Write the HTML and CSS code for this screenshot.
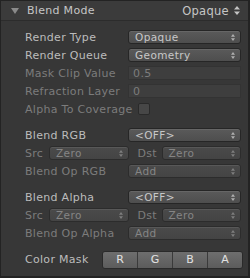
FILE: index.html
```html
<!DOCTYPE html>
<html>
<head>
  <meta charset="utf-8">
  <link rel="stylesheet" href="styles.css">
</head>
<body>
  <div class="panel">
    <div class="header">
      <span class="fold"></span>
      <span class="title">Blend Mode</span>
      <span class="mode">Opaque</span>
      <svg class="updown big" width="6" height="9" viewBox="0 0 6 9"><path d="M3 0L6 3.5H0Z M3 9L0 5.5H6Z" fill="#c4c4c4"/></svg>
    </div>

    <div class="body">
      <div class="row">
        <label class="label">Render Type</label>
        <div class="select"><span>Opaque</span><svg class="updown" width="4" height="7" viewBox="0 0 4 7"><path d="M2 0L4 2.7H0Z M2 7L0 4.3H4Z"/></svg></div>
      </div>
      <div class="row">
        <label class="label">Render Queue</label>
        <div class="select"><span>Geometry</span><svg class="updown" width="4" height="7" viewBox="0 0 4 7"><path d="M2 0L4 2.7H0Z M2 7L0 4.3H4Z"/></svg></div>
      </div>
      <div class="row">
        <label class="label off">Mask Clip Value</label>
        <div class="field">0.5</div>
      </div>
      <div class="row">
        <label class="label off">Refraction Layer</label>
        <div class="field">0</div>
      </div>
      <div class="row">
        <label class="label off">Alpha To Coverage</label>
        <div class="check"></div>
      </div>

      <div class="group">
        <div class="row">
          <label class="label">Blend RGB</label>
          <div class="select"><span>&lt;OFF&gt;</span><svg class="updown" width="4" height="7" viewBox="0 0 4 7"><path d="M2 0L4 2.7H0Z M2 7L0 4.3H4Z"/></svg></div>
        </div>
        <div class="row pair">
          <label class="label off short">Src</label>
          <div class="select dim"><span>Zero</span><svg class="updown" width="4" height="7" viewBox="0 0 4 7"><path d="M2 0L4 2.7H0Z M2 7L0 4.3H4Z"/></svg></div>
          <label class="label off short dst">Dst</label>
          <div class="select dim"><span>Zero</span><svg class="updown" width="4" height="7" viewBox="0 0 4 7"><path d="M2 0L4 2.7H0Z M2 7L0 4.3H4Z"/></svg></div>
        </div>
        <div class="row">
          <label class="label off">Blend Op RGB</label>
          <div class="select dim"><span>Add</span><svg class="updown" width="4" height="7" viewBox="0 0 4 7"><path d="M2 0L4 2.7H0Z M2 7L0 4.3H4Z"/></svg></div>
        </div>
      </div>

      <div class="group">
        <div class="row">
          <label class="label">Blend Alpha</label>
          <div class="select"><span>&lt;OFF&gt;</span><svg class="updown" width="4" height="7" viewBox="0 0 4 7"><path d="M2 0L4 2.7H0Z M2 7L0 4.3H4Z"/></svg></div>
        </div>
        <div class="row pair">
          <label class="label off short">Src</label>
          <div class="select dim"><span>Zero</span><svg class="updown" width="4" height="7" viewBox="0 0 4 7"><path d="M2 0L4 2.7H0Z M2 7L0 4.3H4Z"/></svg></div>
          <label class="label off short dst">Dst</label>
          <div class="select dim"><span>Zero</span><svg class="updown" width="4" height="7" viewBox="0 0 4 7"><path d="M2 0L4 2.7H0Z M2 7L0 4.3H4Z"/></svg></div>
        </div>
        <div class="row">
          <label class="label off">Blend Op Alpha</label>
          <div class="select dim"><span>Add</span><svg class="updown" width="4" height="7" viewBox="0 0 4 7"><path d="M2 0L4 2.7H0Z M2 7L0 4.3H4Z"/></svg></div>
        </div>
      </div>

      <div class="row mask-row">
        <label class="label mask-label">Color Mask</label>
        <div class="mask">
          <button class="mask-btn">R</button>
          <button class="mask-btn">G</button>
          <button class="mask-btn">B</button>
          <button class="mask-btn">A</button>
        </div>
      </div>
    </div>
  </div>
</body>
</html>
```

FILE: styles.css
```css
* {
  margin: 0;
  padding: 0;
  box-sizing: border-box;
}

body {
  background: #2a2a2a;
  font-family: 'DejaVu Sans', 'Liberation Sans', sans-serif;
  font-size: 11px;
  color: #c0c0c0;
}

.panel {
  width: 250px;
  height: 278px;
  background: #373737;
  border: 1px solid #232323;
  border-right-width: 2px;
  border-bottom-width: 2px;
  overflow: hidden;
}

.header {
  height: 20px;
  display: flex;
  align-items: center;
  background: #3b3b3b;
  border-bottom: 1px solid #2c2c2c;
  padding: 0 8px 0 10px;
}

.fold {
  width: 0;
  height: 0;
  border-left: 4px solid transparent;
  border-right: 4px solid transparent;
  border-top: 6px solid #8a8a8a;
  margin-right: 8px;
}

.title {
  flex: 1;
  color: #c6c6c6;
  letter-spacing: 0.3px;
}

.mode {
  color: #c6c6c6;
  font-size: 11.5px;
  letter-spacing: 0.3px;
  margin-right: 5px;
}

.body {
  padding: 7px 7px 0 24px;
}

.row {
  height: 18px;
  display: flex;
  align-items: center;
}

.group {
  margin-top: 8px;
}

.label {
  width: 103px;
  flex: none;
  color: #bcbcbc;
  letter-spacing: 0.3px;
  white-space: nowrap;
}

.label.off {
  color: #7c7c7c;
}

.label.short {
  width: 24px;
}

.label.dst {
  width: 33px;
  padding-left: 9px;
}

.select {
  flex: 1;
  height: 14px;
  display: flex;
  align-items: center;
  justify-content: space-between;
  padding: 0 5px 0 6px;
  border: 1px solid #262626;
  border-radius: 3px;
  background: linear-gradient(#5a5a5a, #4e4e4e);
  box-shadow: inset 0 1px 0 rgba(255, 255, 255, 0.08);
  color: #c8c8c8;
  letter-spacing: 0.4px;
  font-size: 10.5px;
}

.select .updown path {
  fill: #b0b0b0;
}

.select.dim {
  background: linear-gradient(#4a4a4a, #444444);
  border-color: #2c2c2c;
  color: #858585;
}

.select.dim .updown path {
  fill: #7e7e7e;
}

.field {
  flex: 1;
  height: 14px;
  line-height: 13px;
  padding-left: 4px;
  background: #3e3e3e;
  border: 1px solid #333333;
  color: #7c7c7c;
  letter-spacing: 0.4px;
}

.check {
  width: 12px;
  height: 12px;
  margin-left: 10px;
  border: 1px solid #2a2a2a;
  border-radius: 2px;
  background: #474747;
}

.mask-row {
  margin-top: 8px;
  height: 19px;
}

.mask-label {
  width: 77px;
  color: #bcbcbc;
}

.mask {
  flex: 1;
  height: 18px;
  display: flex;
  margin-right: -2px;
  border: 1px solid #2a2a2a;
  border-radius: 3px;
  overflow: hidden;
}

.mask-btn {
  flex: 1;
  border: none;
  border-left: 1px solid #3a3a3a;
  background: linear-gradient(#6e6e6e, #5c5c5c);
  color: #e2e2e2;
  font-family: 'DejaVu Sans', 'Liberation Sans', sans-serif;
  font-size: 11px;
}

.mask-btn:first-child {
  border-left: none;
}
```
